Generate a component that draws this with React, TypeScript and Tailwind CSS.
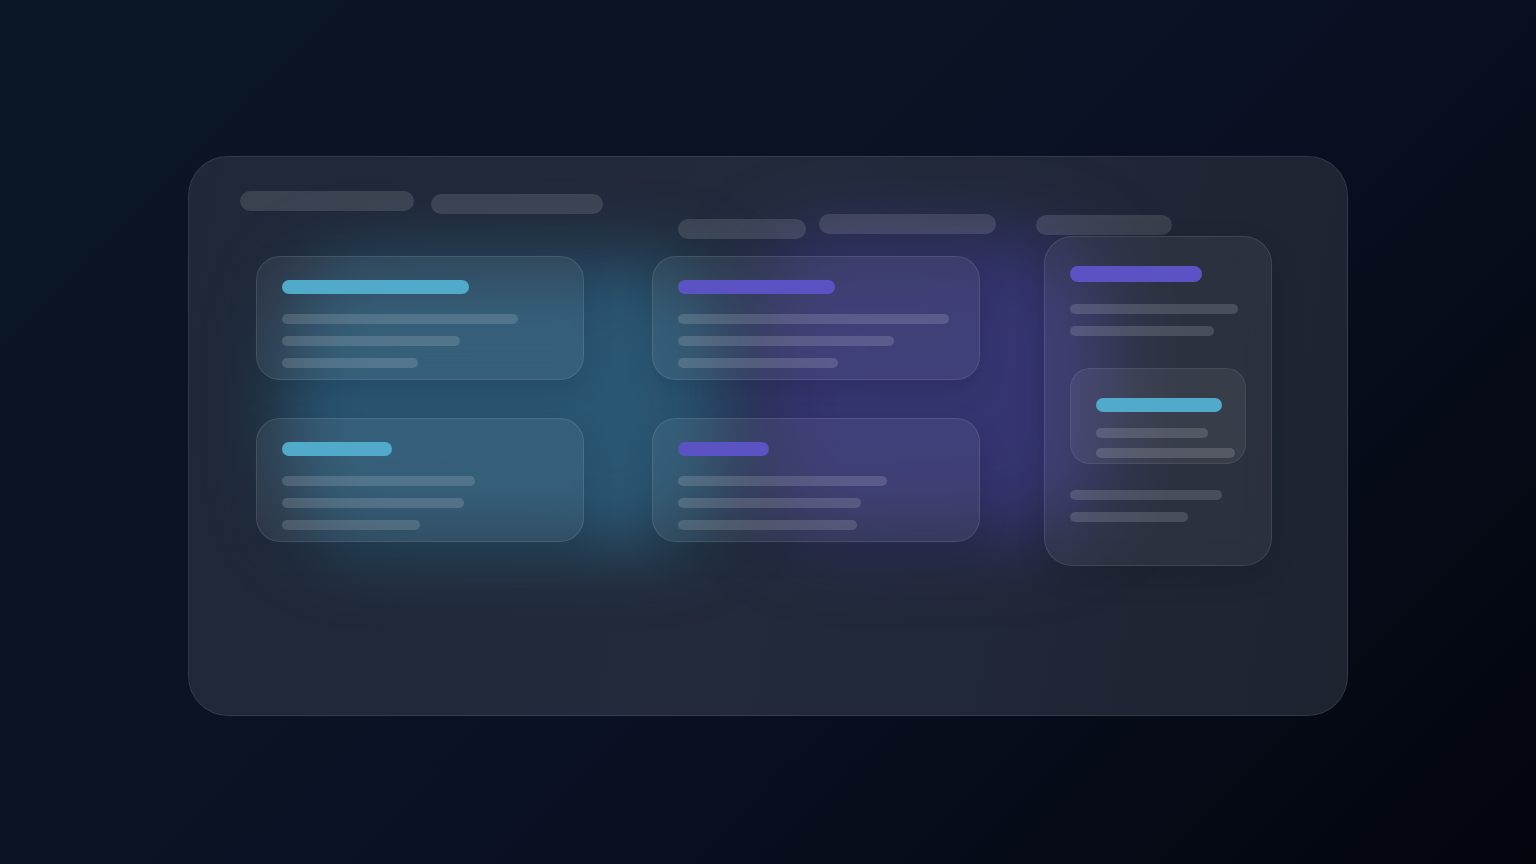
import { FC, ReactElement } from 'react';

interface IBarProps {
  w: string;
  tone?: 'line' | 'cyan' | 'violet' | 'pill';
  className?: string;
}

const Bar: FC<IBarProps> = ({ w, tone = 'line', className = '' }): ReactElement => {
  const toneClass =
    tone === 'cyan'
      ? 'h-[14px] bg-[#52aacb]'
      : tone === 'violet'
        ? 'h-[14px] bg-[#5b52c4]'
        : tone === 'pill'
          ? 'h-[20px] bg-white/[0.12]'
          : 'h-[10px] bg-white/[0.14]';
  return <div className={`${w} ${toneClass} shrink-0 rounded-full ${className}`} />;
};

interface ICardProps {
  accent: 'cyan' | 'violet';
  accentW: string;
  lines: string[];
}

const SkeletonCard: FC<ICardProps> = ({ accent, accentW, lines }): ReactElement => (
  <div className="flex h-[124px] w-[328px] flex-col rounded-[24px] border border-white/[0.1] bg-white/[0.06] pl-[25px] pt-[23px] shadow-[0_10px_30px_rgba(0,0,0,0.12)] backdrop-blur-md">
    <Bar w={accentW} tone={accent} />
    <div className="mt-[20px] flex flex-col gap-[12px]">
      {lines.map((line: string, i: number) => (
        <Bar key={i} w={line} />
      ))}
    </div>
  </div>
);

const App: FC = (): ReactElement => {
  return (
    <div className="min-h-screen w-full bg-[linear-gradient(135deg,#0a1625_0%,#0b1124_55%,#02050c_100%)] pt-[156px] font-['Inter',sans-serif]">
      <div className="relative mx-auto h-[560px] w-[1160px] overflow-hidden rounded-[40px] border border-white/[0.09] bg-[linear-gradient(100deg,#1f2838_0%,#222a3b_50%,#1e2330_100%)] px-[51px] pt-[34px]">
        {/* ambient glows */}
        <div className="pointer-events-none absolute left-[95px] top-[105px] h-[285px] w-[445px] rounded-[80px] bg-[#2d6a8a]/70 blur-[36px]" />
        <div className="pointer-events-none absolute left-[565px] top-[80px] h-[300px] w-[350px] rounded-[80px] bg-[#433d98]/60 blur-[40px]" />

        <div className="relative flex h-[45px] items-start">
          <Bar w="w-[174px]" tone="pill" />
          <Bar w="w-[172px]" tone="pill" className="ml-[17px] mt-[3px]" />
          <Bar w="w-[128px]" tone="pill" className="ml-[75px] mt-[28px]" />
          <Bar w="w-[177px]" tone="pill" className="ml-[13px] mt-[23px]" />
          <Bar w="w-[136px]" tone="pill" className="ml-[40px] mt-[24px]" />
        </div>

        <div className="relative ml-[16px] flex items-start">
          <div className="mt-[20px] flex flex-col gap-[38px]">
            <SkeletonCard accent="cyan" accentW="w-[187px]" lines={['w-[236px]', 'w-[178px]', 'w-[136px]']} />
            <SkeletonCard accent="cyan" accentW="w-[110px]" lines={['w-[193px]', 'w-[182px]', 'w-[138px]']} />
          </div>
          <div className="ml-[68px] mt-[20px] flex flex-col gap-[38px]">
            <SkeletonCard accent="violet" accentW="w-[157px]" lines={['w-[271px]', 'w-[216px]', 'w-[160px]']} />
            <SkeletonCard accent="violet" accentW="w-[91px]" lines={['w-[209px]', 'w-[183px]', 'w-[179px]']} />
          </div>
          <div className="ml-[64px] flex h-[330px] w-[228px] flex-col rounded-[28px] border border-white/[0.1] bg-white/[0.06] pl-[25px] pt-[29px] shadow-[0_10px_30px_rgba(0,0,0,0.12)] backdrop-blur-md">
            <Bar w="w-[132px]" tone="violet" className="!h-[16px]" />
            <div className="mt-[22px] flex flex-col gap-[12px]">
              <Bar w="w-[168px]" />
              <Bar w="w-[144px]" />
            </div>
            <div className="mt-[32px] flex h-[96px] w-[176px] flex-col rounded-[20px] border border-white/[0.08] bg-white/[0.06] pl-[25px] pt-[29px]">
              <Bar w="w-[126px]" tone="cyan" />
              <Bar w="w-[112px]" className="mt-[16px]" />
              <Bar w="w-[139px]" className="mt-[10px]" />
            </div>
            <div className="mt-[26px] flex flex-col gap-[12px]">
              <Bar w="w-[152px]" />
              <Bar w="w-[118px]" />
            </div>
          </div>
        </div>
      </div>
    </div>
  );
};

export default App;
